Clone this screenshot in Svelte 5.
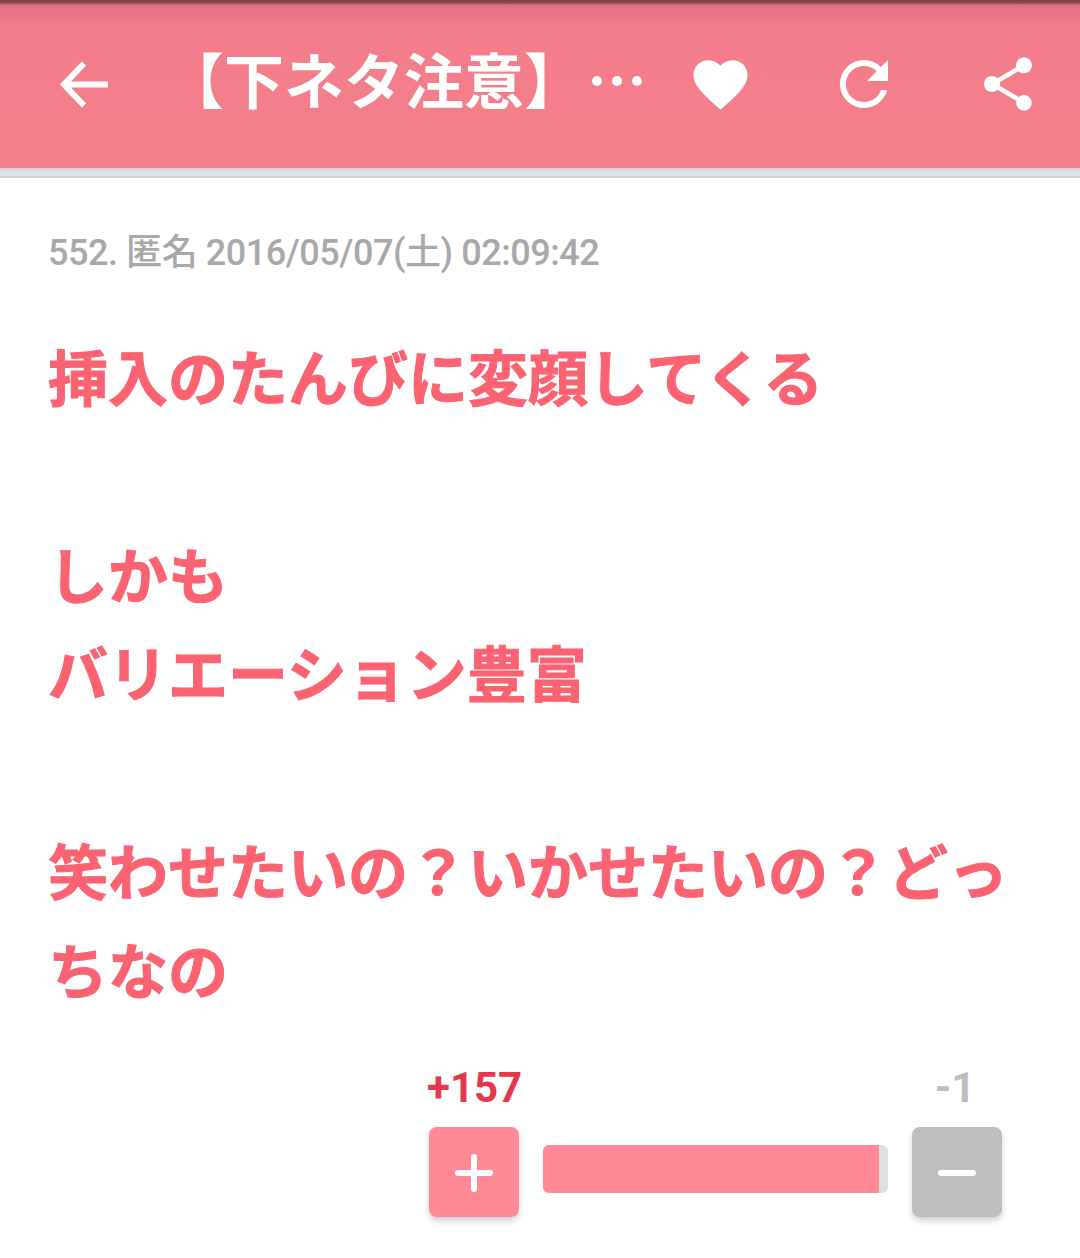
<script>
    const lines = ['挿入のたんびに変顔してくる', '', 'しかも', 'バリエーション豊富', '', '笑わせたいの？いかせたいの？どっちなの'];
</script>

<div class="page">
    <header class="toolbar">
        <button class="icon back" aria-label="戻る">
            <svg width="60" height="60" viewBox="0 0 60 60"><path d="M54 30.5H12M30 9.5 10 30.5l20 21" fill="none" stroke="#fff" stroke-width="6"/></svg>
        </button>
        <div class="title"><span class="title-text">【下ネタ注意】</span><span class="dots"><i></i><i></i><i></i></span></div>
        <button class="icon" aria-label="お気に入り">
            <svg width="65" height="65" viewBox="0 0 24 24"><path d="M12 21.35l-1.45-1.32C5.4 15.36 2 12.28 2 8.5 2 5.42 4.42 3 7.5 3c1.74 0 3.41.81 4.5 2.09C13.09 3.81 14.76 3 16.5 3 19.58 3 22 5.42 22 8.5c0 3.78-3.4 6.86-8.55 11.54L12 21.35z" fill="#fff"/></svg>
        </button>
        <button class="icon" aria-label="更新">
            <svg width="72" height="72" viewBox="0 0 24 24"><path d="M17.65 6.35A7.96 7.96 0 0 0 12 4a8 8 0 1 0 7.73 10h-2.08A6 6 0 1 1 12 6c1.66 0 3.14.69 4.22 1.78L13 11h7V4l-2.35 2.35z" fill="#fff"/></svg>
        </button>
        <button class="icon" aria-label="共有">
            <svg width="64" height="64" viewBox="0 0 24 24"><path d="M18 16.08c-.76 0-1.44.3-1.96.77L8.91 12.7c.05-.23.09-.46.09-.7s-.04-.47-.09-.7l7.05-4.11c.54.5 1.25.81 2.04.81 1.66 0 3-1.34 3-3s-1.34-3-3-3-3 1.34-3 3c0 .24.04.47.09.7L8.04 9.81C7.5 9.31 6.79 9 6 9c-1.66 0-3 1.34-3 3s1.34 3 3 3c.79 0 1.5-.31 2.04-.81l7.12 4.16c-.05.21-.08.43-.08.65 0 1.61 1.31 2.92 2.92 2.92 1.61 0 2.92-1.31 2.92-2.92s-1.31-2.92-2.92-2.92z" fill="#fff"/></svg>
        </button>
    </header>
    <div class="toolbar-edge"></div>

    <main class="comment">
        <div class="meta">552. 匿名 2016/05/07(土) 02:09:42</div>
        <div class="body">
            {#each lines as line}
                <p>{line || '\u00a0'}</p>
            {/each}
        </div>

        <div class="votes">
            <div class="counts">
                <span class="plus-count">+157</span>
                <span class="minus-count">-1</span>
            </div>
            <div class="controls">
                <button class="vote plus" aria-label="プラス"><i class="h"></i><i class="v"></i></button>
                <div class="bar"><div class="fill" style="width: {157 / 158 * 100 - 2}%"></div></div>
                <button class="vote minus" aria-label="マイナス"><i class="h"></i></button>
            </div>
        </div>
    </main>
</div>

<style>
    :global(body) {
        background: #fff;
        font-family: Roboto, "Noto Sans CJK JP", sans-serif;
    }
    .page {
        width: 1080px;
        height: 1258px;
        overflow: hidden;
    }
    .toolbar {
        height: 168px;
        display: flex;
        align-items: center;
        padding: 0 12px 0 24px;
        background: linear-gradient(#7d3f47 0, #8b4a52 3px, #e27083 5px, #e57687 15px, #f47d8b 26px, #f57e8b 100%);
    }
    .toolbar-edge {
        height: 10px;
        background: linear-gradient(#d3d6d8 0, #dfe3e5 4px, #e6e9ea 7px, #cfcfcf 9px, #dcdcdc 100%);
    }
    .icon {
        width: 120px;
        height: 120px;
        flex: none;
        display: flex;
        align-items: center;
        justify-content: center;
        padding: 0;
        border: none;
        background: none;
        margin-left: 24px;
    }
    .back {
        margin-left: 0;
    }
    .title {
        flex: 1;
        display: flex;
        align-items: center;
        color: #fff;
        font-size: 60px;
        font-weight: 700;
        line-height: 70px;
        margin-left: 20px;
        min-width: 0;
    }
    .title-text {
        white-space: nowrap;
    }
    .dots {
        display: flex;
        gap: 10px;
        margin: 0 0 6px 8px;
    }
    .dots i {
        width: 10px;
        height: 10px;
        border-radius: 50%;
        background: #fff;
    }
    .comment {
        padding: 51px 48px 0;
    }
    .meta {
        font-size: 36px;
        font-weight: 500;
        line-height: 48px;
        letter-spacing: -0.45px;
        color: #a8a8a8;
    }
    .body {
        margin-top: 55px;
        color: #fb6272;
        font-size: 60px;
        font-weight: 700;
        line-height: 98.8px;
        -webkit-text-stroke: 1px #fb6272;
    }
    .body p {
        margin: 0;
    }
    .votes {
        margin: 42px 30px 0 auto;
        width: 573px;
    }
    .counts {
        display: flex;
        justify-content: space-between;
        font-size: 42px;
        line-height: 44px;
        font-weight: 700;
    }
    .counts span {
        width: 90px;
        text-align: center;
    }
    .plus-count {
        margin-left: -2px;
        color: #e8374a;
    }
    .minus-count {
        padding-right: 4px;
        box-sizing: border-box;
        color: #bdbdbd;
    }
    .controls {
        display: flex;
        align-items: center;
        gap: 24px;
        margin-top: 17px;
    }
    .vote {
        position: relative;
        width: 90px;
        height: 90px;
        flex: none;
        padding: 0;
        border: none;
        border-radius: 8px;
        box-shadow: 0 4px 6px rgba(0, 0, 0, 0.18);
    }
    .plus {
        background: #ff8a96;
    }
    .minus {
        background: #bebebe;
    }
    .vote i {
        position: absolute;
        background: #fff;
        border-radius: 3px;
    }
    .vote .h {
        left: 26px;
        top: 43px;
        width: 38px;
        height: 6px;
    }
    .vote .v {
        left: 42px;
        top: 27px;
        width: 6px;
        height: 38px;
    }
    .bar {
        flex: 1;
        height: 48px;
        margin-bottom: 6px;
        border-radius: 6px;
        overflow: hidden;
        background: #e0e0e0;
    }
    .fill {
        height: 100%;
        background: #ff8a96;
    }
</style>
